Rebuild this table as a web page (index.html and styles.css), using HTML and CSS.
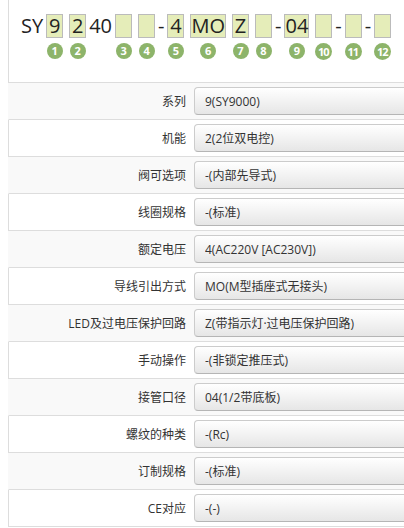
FILE: index.html
```html
<!DOCTYPE html>
<html lang="zh-CN">
<head>
    <meta charset="UTF-8">
    <meta name="viewport" content="width=device-width, initial-scale=1.0">
    <title>型号选型</title>
    <link rel="stylesheet" href="styles.css">
</head>
<body>
<div class="spec">
    <div class="code-panel">
        <div class="code">
            <div class="seg text"><span class="plain">SY</span></div>
            <div class="seg"><span class="box">9</span><span class="num">1</span></div>
            <div class="seg"><span class="box">2</span><span class="num">2</span></div>
            <div class="seg text"><span class="plain">40</span></div>
            <div class="seg"><span class="box"></span><span class="num">3</span></div>
            <div class="seg"><span class="box"></span><span class="num">4</span></div>
            <div class="seg text"><span class="plain">-</span></div>
            <div class="seg"><span class="box">4</span><span class="num">5</span></div>
            <div class="seg"><span class="box">MO</span><span class="num">6</span></div>
            <div class="seg"><span class="box">Z</span><span class="num">7</span></div>
            <div class="seg"><span class="box"></span><span class="num">8</span></div>
            <div class="seg text"><span class="plain">-</span></div>
            <div class="seg"><span class="box">04</span><span class="num">9</span></div>
            <div class="seg"><span class="box"></span><span class="num two">10</span></div>
            <div class="seg text"><span class="plain">-</span></div>
            <div class="seg"><span class="box"></span><span class="num two">11</span></div>
            <div class="seg text"><span class="plain">-</span></div>
            <div class="seg"><span class="box"></span><span class="num two">12</span></div>
        </div>
    </div>

    <div class="row alt">
        <label class="label">系列</label>
        <select class="pick"><option>9(SY9000)</option></select>
    </div>
    <div class="row">
        <label class="label">机能</label>
        <select class="pick"><option>2(2位双电控)</option></select>
    </div>
    <div class="row alt">
        <label class="label">阀可选项</label>
        <select class="pick"><option>-(内部先导式)</option></select>
    </div>
    <div class="row">
        <label class="label">线圈规格</label>
        <select class="pick"><option>-(标准)</option></select>
    </div>
    <div class="row alt">
        <label class="label">额定电压</label>
        <select class="pick"><option>4(AC220V [AC230V])</option></select>
    </div>
    <div class="row">
        <label class="label">导线引出方式</label>
        <select class="pick"><option>MO(M型插座式无接头)</option></select>
    </div>
    <div class="row alt">
        <label class="label">LED及过电压保护回路</label>
        <select class="pick"><option>Z(带指示灯·过电压保护回路)</option></select>
    </div>
    <div class="row">
        <label class="label">手动操作</label>
        <select class="pick"><option>-(非锁定推压式)</option></select>
    </div>
    <div class="row alt">
        <label class="label">接管口径</label>
        <select class="pick"><option>04(1/2带底板)</option></select>
    </div>
    <div class="row">
        <label class="label">螺纹的种类</label>
        <select class="pick"><option>-(Rc)</option></select>
    </div>
    <div class="row alt">
        <label class="label">订制规格</label>
        <select class="pick"><option>-(标准)</option></select>
    </div>
    <div class="row">
        <label class="label">CE对应</label>
        <select class="pick"><option>-(-)</option></select>
    </div>
</div>
</body>
</html>
```

FILE: styles.css
```css
html, body {
    margin: 0;
    padding: 0;
    background-color: #fff;
    overflow: hidden;
}

body {
    padding-left: 8px;
    font-family: "Open Sans", "Noto Sans CJK SC", sans-serif;
    color: #333;
}

.spec {
    overflow: hidden;
}

/* Model code panel */
.code-panel {
    height: 82px;
    border-left: 1px solid #ddd;
    border-bottom: 1px solid #ddd;
}

.code {
    display: flex;
    align-items: flex-start;
    padding: 14px 0 0 12px;
    font-size: 20px;
    color: #222;
}

.seg {
    display: flex;
    flex-direction: column;
    align-items: center;
    gap: 5px;
    margin: 0 3px;
}

.seg.text {
    margin: 0;
}

.plain {
    height: 24px;
    line-height: 24px;
}

.box {
    min-width: 15px;
    height: 22px;
    line-height: 22px;
    text-align: center;
    border: 1px solid #bbb;
    background-color: #e5edb9;
}

.num {
    width: 16px;
    height: 16px;
    border-radius: 50%;
    background-color: #8db46a;
    color: #fff;
    font-size: 11px;
    font-weight: bold;
    line-height: 16px;
    text-align: center;
}

.num.two {
    width: 17px;
    height: 17px;
    line-height: 17px;
    letter-spacing: -1px;
    text-indent: -1px;
}

/* Option rows */
.row {
    display: flex;
    align-items: center;
    gap: 8px;
    height: 36px;
    border-left: 1px solid #ddd;
    border-bottom: 1px solid #ddd;
}

.row.alt {
    background-color: #f9f9f9;
    border-left-color: #f9f9f9;
}

.label {
    width: 177px;
    flex-shrink: 0;
    text-align: right;
    font-size: 12px;
    color: #333;
}

.pick {
    appearance: none;
    -webkit-appearance: none;
    flex-shrink: 0;
    width: 260px;
    height: 28px;
    margin: 0;
    padding: 0 10px;
    border: 1px solid #ccc;
    border-bottom-color: #b5b5b5;
    border-radius: 4px;
    background: linear-gradient(to bottom, #fff, #e6e6e6);
    font-family: "Open Sans", "Noto Sans CJK SC", sans-serif;
    font-size: 12px;
    color: #333;
    outline: none;
}
```
